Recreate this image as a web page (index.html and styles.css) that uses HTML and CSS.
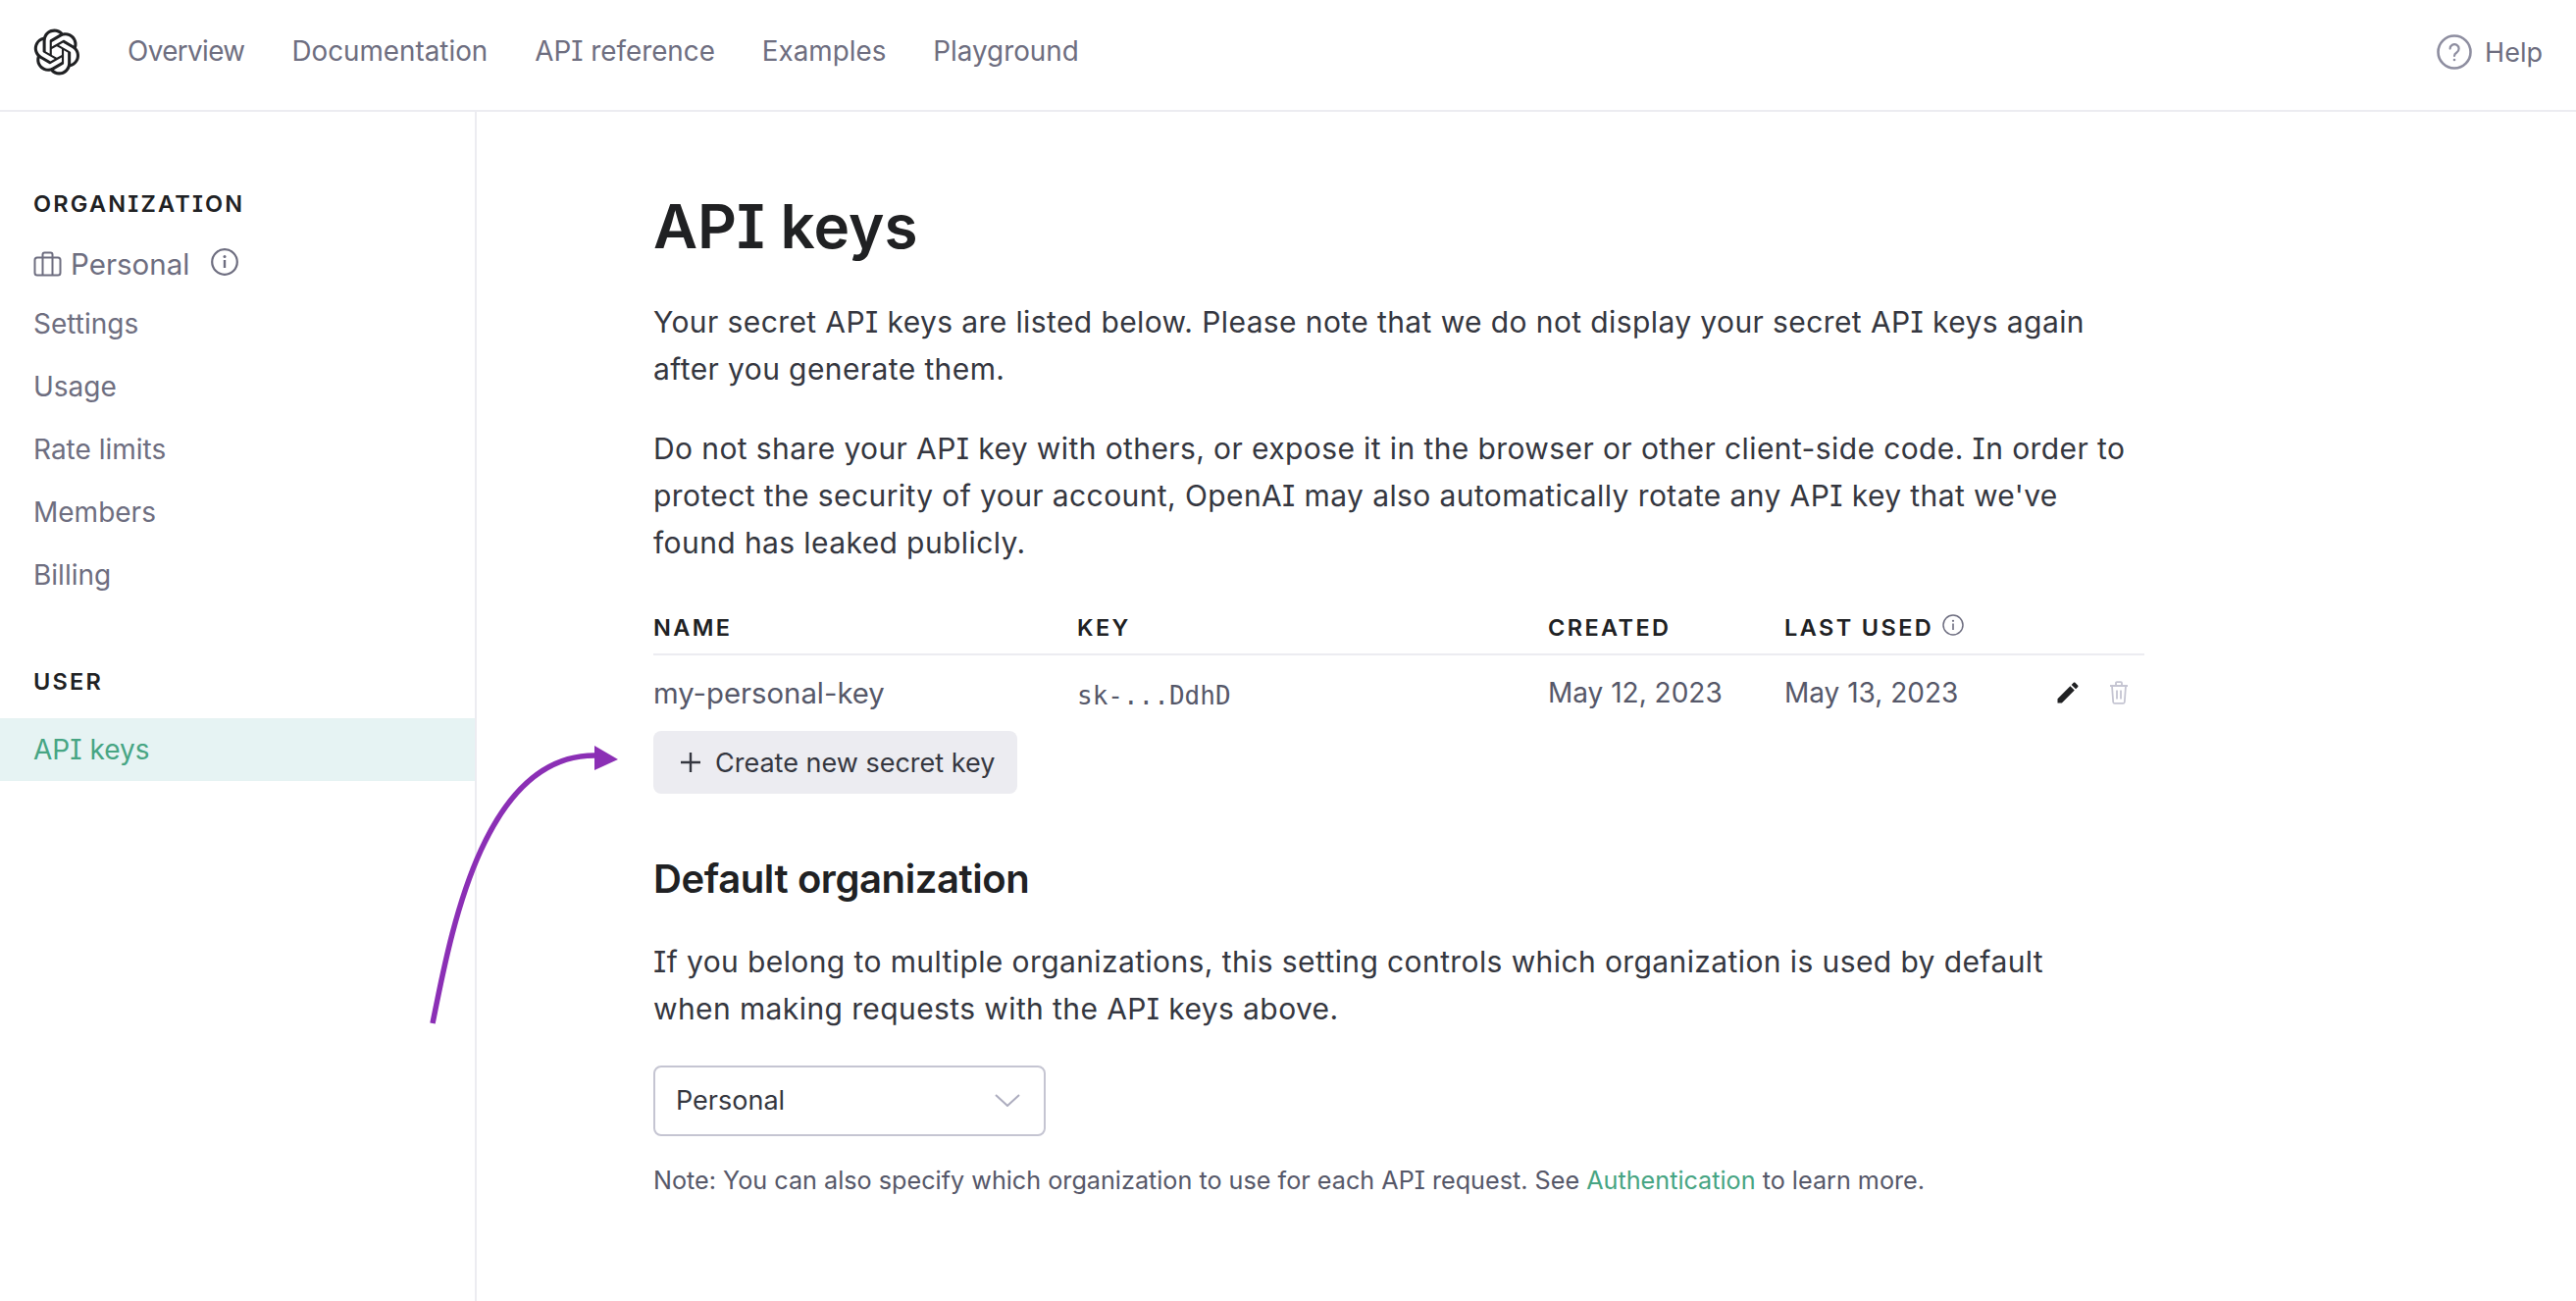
FILE: index.html
```html
<!DOCTYPE html>
<html lang="en">
<head>
<meta charset="utf-8">
<title>API keys</title>
<link rel="stylesheet" href="styles.css">
</head>
<body>
<div class="page">
  <header class="topbar">
    <svg class="logo" viewBox="0 0 41 41" aria-label="OpenAI"><path fill="currentColor" d="M37.5324 16.8707C37.9808 15.5241 38.1363 14.0974 37.9886 12.6859C37.8409 11.2744 37.3934 9.91076 36.676 8.68622C35.6126 6.83404 33.9882 5.3676 32.0373 4.4985C30.0864 3.62941 27.9098 3.40259 25.8215 3.85078C24.8796 2.7893 23.7219 1.94125 22.4257 1.36341C21.1295 0.785575 19.7249 0.491269 18.3058 0.500197C16.1708 0.495044 14.0893 1.16803 12.3614 2.42214C10.6335 3.67624 9.34853 5.44666 8.6917 7.47815C7.30085 7.76286 5.98686 8.3414 4.8377 9.17505C3.68854 10.0087 2.73073 11.0782 2.02839 12.312C0.956464 14.1591 0.498905 16.2988 0.721698 18.4228C0.944492 20.5467 1.83612 22.5449 3.268 24.1293C2.81966 25.4759 2.66413 26.9026 2.81182 28.3141C2.95951 29.7256 3.40701 31.0892 4.12437 32.3138C5.18791 34.1659 6.8123 35.6322 8.76321 36.5013C10.7141 37.3704 12.8907 37.5973 14.9789 37.1492C15.9208 38.2107 17.0786 39.0587 18.3747 39.6366C19.6709 40.2144 21.0755 40.5087 22.4946 40.4998C24.6307 40.5054 26.7133 39.8321 28.4418 38.5772C30.1704 37.3223 31.4556 35.5506 32.1119 33.5179C33.5027 33.2332 34.8167 32.6547 35.9659 31.821C37.115 30.9874 38.0728 29.9178 38.7752 28.684C39.8458 26.8371 40.3023 24.6979 40.0789 22.5748C39.8556 20.4517 38.9639 18.4544 37.5324 16.8707ZM22.4978 37.8849C20.7443 37.8874 19.0459 37.2733 17.6994 36.1501C17.7601 36.117 17.8666 36.0586 17.936 36.0161L25.9004 31.4156C26.1003 31.3019 26.2663 31.137 26.3813 30.9378C26.4964 30.7386 26.5563 30.5124 26.5549 30.2825V19.0542L29.9213 20.998C29.9389 21.0068 29.9541 21.0198 29.9656 21.0359C29.977 21.052 29.9842 21.0707 29.9867 21.0902V30.3889C29.9842 32.375 29.1946 34.2791 27.7909 35.6841C26.3872 37.0892 24.4838 37.8806 22.4978 37.8849ZM6.39227 31.0064C5.51397 29.4888 5.19742 27.7107 5.49804 25.9832C5.55718 26.0187 5.66048 26.0818 5.73461 26.1244L13.699 30.7248C13.8975 30.8408 14.1233 30.902 14.3532 30.902C14.583 30.902 14.8088 30.8408 15.0073 30.7248L24.731 25.1103V28.9979C24.7321 29.0177 24.7283 29.0376 24.7199 29.0556C24.7115 29.0736 24.6988 29.0893 24.6829 29.1012L16.6317 33.7497C14.9096 34.7416 12.8643 35.0097 10.9447 34.4954C9.02506 33.9811 7.38785 32.7263 6.39227 31.0064ZM4.29707 13.6194C5.17156 12.0998 6.55279 10.9364 8.19885 10.3327C8.19885 10.4013 8.19491 10.5228 8.19491 10.6071V19.808C8.19351 20.0378 8.25334 20.2638 8.36823 20.4629C8.48312 20.6619 8.64893 20.8267 8.84863 20.9404L18.5723 26.5542L15.206 28.4979C15.1894 28.5089 15.1703 28.5155 15.1505 28.5173C15.1307 28.5191 15.1107 28.516 15.0924 28.5082L7.04046 23.8557C5.32135 22.8601 4.06716 21.2235 3.55289 19.3046C3.03862 17.3858 3.30624 15.3413 4.29707 13.6194ZM31.955 20.0556L22.2312 14.4411L25.5976 12.4981C25.6142 12.4872 25.6333 12.4805 25.6531 12.4787C25.6729 12.4769 25.6928 12.4801 25.7111 12.4879L33.7631 17.1364C34.9967 17.849 36.0017 18.8982 36.6606 20.1613C37.3194 21.4244 37.6047 22.849 37.4832 24.2684C37.3617 25.6878 36.8382 27.0432 35.9743 28.1759C35.1103 29.3086 33.9415 30.1717 32.6047 30.6641C32.6047 30.5947 32.6047 30.4733 32.6047 30.3889V21.188C32.6066 20.9586 32.5474 20.7328 32.4332 20.5338C32.319 20.3348 32.154 20.1698 31.955 20.0556ZM35.3055 15.0128C35.2464 14.9765 35.1431 14.9142 35.069 14.8717L27.1045 10.2712C26.906 10.1554 26.6803 10.0943 26.4504 10.0943C26.2206 10.0943 25.9948 10.1554 25.7963 10.2712L16.0726 15.8858V11.9982C16.0715 11.9783 16.0753 11.9585 16.0837 11.9405C16.0921 11.9225 16.1048 11.9068 16.1207 11.8949L24.1719 7.25025C25.4053 6.53903 26.8158 6.19376 28.2383 6.25482C29.6608 6.31589 31.0364 6.78077 32.2044 7.59508C33.3723 8.40939 34.2842 9.53945 34.8334 10.8531C35.3826 12.1667 35.5464 13.6095 35.3055 15.0128ZM14.2424 21.9419L10.8752 19.9981C10.8576 19.9893 10.8423 19.9763 10.8309 19.9602C10.8195 19.9441 10.8122 19.9254 10.8098 19.9058V10.6071C10.8107 9.18295 11.2173 7.78848 11.9819 6.58696C12.7466 5.38544 13.8377 4.42659 15.1275 3.82264C16.4173 3.21869 17.8524 2.99464 19.2649 3.1767C20.6775 3.35876 22.0089 3.93941 23.1034 4.85067C23.0427 4.88379 22.937 4.94215 22.8668 4.98473L14.9024 9.58517C14.7025 9.69878 14.5366 9.86356 14.4215 10.0626C14.3065 10.2616 14.2466 10.4877 14.2479 10.7175L14.2424 21.9419ZM16.071 17.9991L20.4018 15.4978L24.7325 17.9975V22.9985L20.4018 25.4983L16.071 22.9985V17.9991Z"/></svg>
    <nav class="topnav">
      <a class="nav-first">Overview</a><a>Documentation</a><a>API reference</a><a>Examples</a><a>Playground</a>
    </nav>
    <a class="help">
      <svg class="help-icon" viewBox="0 0 36 36" fill="none" stroke="currentColor"><circle cx="18" cy="18" r="16.5" stroke-width="2.6"/><path d="M13.6 14.6a4.5 4.5 0 1 1 6.8 3.9c-1.5.9-2.4 1.7-2.4 3.4" stroke-width="2.2" stroke-linecap="round"/><circle cx="18" cy="26" r="1.3" fill="currentColor" stroke="none"/></svg>
      <span>Help</span>
    </a>
  </header>
  <div class="layout">
    <aside class="sidebar">
      <h4 class="side-title">ORGANIZATION</h4>
      <div class="org-row">
        <svg class="brief" viewBox="0 0 28 26" fill="none" stroke="currentColor" stroke-width="2"><rect x="1" y="6.5" width="26" height="18" rx="2.5"/><path d="M9 24V3.5A2 2 0 0 1 11 1.500h6a2 2 0 0 1 2 2V24"/></svg>
        <span>Personal</span>
        <svg class="info" viewBox="0 0 28 28" fill="none" stroke="currentColor"><circle cx="14" cy="14" r="12.800" stroke-width="2.200"/><rect x="12.800" y="12" width="2.400" height="8" fill="currentColor" stroke="none"/><circle cx="14" cy="8.500" r="1.500" fill="currentColor" stroke="none"/></svg>
      </div>
      <a class="side-link">Settings</a>
      <a class="side-link">Usage</a>
      <a class="side-link">Rate limits</a>
      <a class="side-link">Members</a>
      <a class="side-link">Billing</a>
      <h4 class="side-title user-title">USER</h4>
      <a class="side-link active">API keys</a>
    </aside>
    <main class="content">
      <h1>API keys</h1>
      <p class="lead">Your secret API keys are listed below. Please note that we do not display your secret API keys again after you generate them.</p>
      <p class="lead second">Do not share your API key with others, or expose it in the browser or other client-side code. In order to protect the security of your account, OpenAI may also automatically rotate any API key that we've found has leaked publicly.</p>
      <div class="keys">
        <div class="keys-row keys-head">
          <span>NAME</span><span>KEY</span><span>CREATED</span>
          <span class="last-used">LAST USED
            <svg class="info-small" viewBox="0 0 22 22" fill="none" stroke="currentColor"><circle cx="11" cy="11" r="10" stroke-width="1.500"/><rect x="10.200" y="9.500" width="1.600" height="6.500" fill="currentColor" stroke="none"/><circle cx="11" cy="6.800" r="1.100" fill="currentColor" stroke="none"/></svg>
          </span>
          <span></span>
        </div>
        <div class="keys-row keys-body">
          <span class="key-name">my-personal-key</span>
          <code>sk-...DdhD</code>
          <span>May 12, 2023</span>
          <span>May 13, 2023</span>
          <span class="actions">
            <svg class="edit" viewBox="0 0 24 24"><path fill="currentColor" d="M3 17.250V21h3.750L17.810 9.940l-3.750-3.750L3 17.250zM20.710 7.040c.39-.39.39-1.020 0-1.410l-2.340-2.340c-.39-.39-1.020-.39-1.410 0l-1.830 1.830 3.750 3.750 1.830-1.830z"/></svg>
            <svg class="trash" viewBox="0 0 20 24" fill="none" stroke="currentColor" stroke-width="1.800"><path d="M1 5h18M7 4.500V2.200c0-.6.4-1 1-1h4c.6 0 1 .4 1 1v2.300M3 5l1.200 16.500c.1.800.7 1.400 1.500 1.400h8.600c.8 0 1.400-.6 1.500-1.400L17 5M8 9.500v9M12 9.500v9"/></svg>
          </span>
        </div>
      </div>
      <button class="create">
        <svg class="plus" viewBox="0 0 20 20" fill="none" stroke="currentColor" stroke-width="2.400"><path d="M10 0v20M0 10h20"/></svg>
        <span>Create new secret key</span>
      </button>
      <h2>Default organization</h2>
      <p class="lead">If you belong to multiple organizations, this setting controls which organization is used by default when making requests with the API keys above.</p>
      <div class="select">
        <span>Personal</span>
        <svg class="chev" viewBox="0 0 26 13" fill="none" stroke="currentColor" stroke-width="2"><path d="M1 1l12 11L25 1"/></svg>
      </div>
      <p class="note">Note: You can also specify which organization to use for each API request. See <a class="link">Authentication</a> to learn more.</p>
    </main>
  </div>
  <svg class="arrow" viewBox="0 0 210 300" aria-hidden="true"><path d="M11 293C28 210 60 20 176 20" fill="none" stroke="#8b2fb5" stroke-width="5.500"/><path d="M176 10L200 24L176 35Z" fill="#8b2fb5"/></svg>
</div>
</body>
</html>
```

FILE: styles.css
```css
* { box-sizing: border-box; }
html, body { margin: 0; height: 100%; background: #fff; }
body {
  font-family: Inter, "Liberation Sans", sans-serif;
  font-feature-settings: "cv08" 1;
  color: #353740;
}
h1, h2, h4, p { margin: 0; }
.page { position: relative; height: 1326px; overflow: hidden; }

.topbar {
  display: flex;
  align-items: center;
  height: 114px;
  padding: 0 34px;
  border-bottom: 2px solid #ececf1;
}
.logo { width: 48px; height: 48px; color: #202123; flex: none; margin-bottom: 6px; }
.topnav { display: flex; gap: 48px; margin-left: 48px; margin-bottom: 8px; font-size: 27.800px; color: #6e6e80; }
.nav-first { letter-spacing: -0.600px; }
.help { margin-left: auto; display: flex; align-items: center; gap: 13px; font-size: 27px; color: #6e6e80; margin-bottom: 6px; }
.help-icon { width: 36px; height: 36px; color: #8e8ea0; }

.layout { display: flex; height: 1212px; }
.sidebar {
  width: 486px;
  flex: none;
  border-right: 2px solid #ececf1;
  padding-top: 80px;
  display: flex;
  flex-direction: column;
}
.side-title { font-size: 23.500px; line-height: 28px; font-weight: 600; letter-spacing: 2.200px; color: #202123; padding-left: 34px; }
.user-title { margin-top: 63px; margin-bottom: 23px; }
.org-row { display: flex; align-items: center; height: 50px; margin-top: 22px; padding-left: 34px; font-size: 29.500px; color: #6e6e80; }
.brief { width: 29px; height: 26px; margin-right: 9px; }
.info { width: 28px; height: 28px; margin-left: 22px; margin-bottom: 4px; }
.org-row + .side-link { margin-top: 4px; }
.side-link { display: flex; align-items: center; height: 64px; padding-left: 34px; font-size: 28px; color: #6e6e80; }
.side-link.active { color: #47a583; background: #e6f3f3; }

.content { flex: 1; padding: 81px 0 0 180px; min-width: 0; }
h1 { font-size: 62px; line-height: 72px; font-weight: 600; color: #202123; }
.lead { width: 1504px; font-size: 30px; line-height: 48px; margin-top: 37px; letter-spacing: 0.400px; }
.lead.second { margin-top: 33px; }

.keys { width: 1520px; margin-top: 35px; }
.keys-row { display: grid; grid-template-columns: 432px 480px 241px 1fr 112px; align-items: center; }
.keys-head {
  height: 56px;
  border-bottom: 2px solid #ececf1;
  font-size: 23.500px;
  font-weight: 600;
  letter-spacing: 2.400px;
  color: #202123;
}
.last-used { display: flex; align-items: center; gap: 9px; }
.info-small { width: 22px; height: 22px; color: #6e6e80; margin-bottom: 4px; }
.keys-body { height: 76px; font-size: 28px; color: #565869; }
.key-name { font-size: 29.300px; }
code { font-family: "DejaVu Sans Mono", monospace; font-size: 26px; padding-top: 5px; }
.actions { display: flex; align-items: center; gap: 28px; padding-left: 20px; }
.edit { width: 28px; height: 28px; color: #202123; }
.trash { width: 20px; height: 24px; color: #c5c5d2; }

.create {
  display: flex;
  align-items: center;
  gap: 15px;
  width: 371px;
  height: 64px;
  margin-top: 1px;
  padding: 0 0 0 28px;
  border: 0;
  border-radius: 8px;
  background: #ececf1;
  color: #353740;
  font: inherit;
  font-size: 27px;
}
.plus { width: 20px; height: 20px; flex: none; }

h2 { font-size: 40px; line-height: 50px; font-weight: 600; color: #202123; margin-top: 62px; letter-spacing: -0.400px; }
h2 + .lead { margin-top: 35px; }

.select {
  display: flex;
  align-items: center;
  justify-content: space-between;
  width: 400px;
  height: 72px;
  margin-top: 34px;
  padding: 0 24px 2px 21px;
  border: 2px solid #c5c5d2;
  border-radius: 8px;
  font-size: 27px;
}
.chev { width: 26px; height: 13px; color: #acacbe; }
.note { margin-top: 28px; font-size: 25.200px; line-height: 34px; color: #565869; }
.link { color: #47a583; }

.arrow { position: absolute; left: 430px; top: 750px; width: 210px; height: 300px; }
```
